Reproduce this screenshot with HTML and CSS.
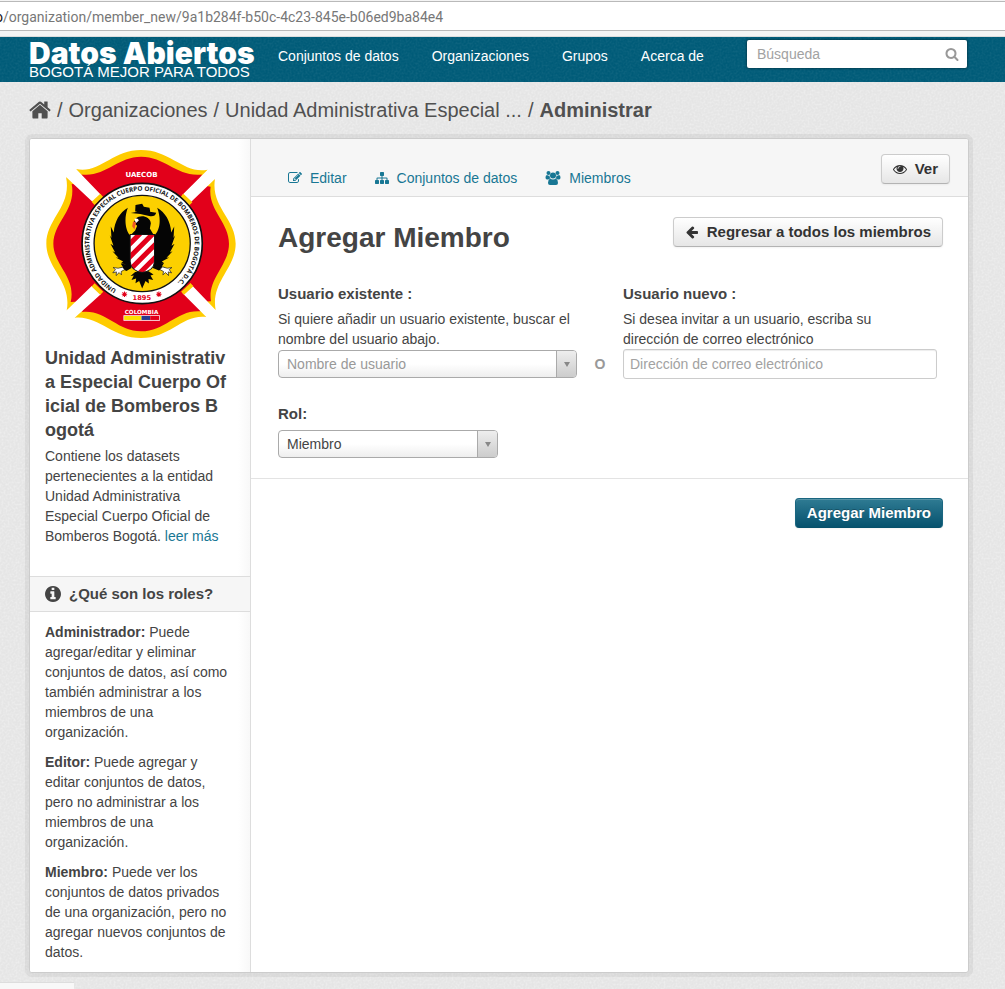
FILE: index.html
```html
<!DOCTYPE html>
<html lang="es">
<head>
<meta charset="utf-8">
<meta name="viewport" content="width=device-width, initial-scale=1">
<title>Agregar Miembro - Datos Abiertos</title>
<link rel="stylesheet" href="styles.css">
</head>
<body>
<div class="browser-bar"><div class="address"><span class="address-host">o</span>/organization/member_new/9a1b284f-b50c-4c23-845e-b06ed9ba84e4</div></div>

<header class="masthead">
  <a class="brand" href="#"><span class="brand-name">Datos Abiertos</span><span class="brand-tag">BOGOTÁ MEJOR PARA TODOS</span></a>
  <nav class="site-nav">
    <a href="#">Conjuntos de datos</a>
    <a href="#">Organizaciones</a>
    <a href="#">Grupos</a>
    <a href="#">Acerca de</a>
  </nav>
  <form class="site-search">
    <input type="text" placeholder="Búsqueda" aria-label="Búsqueda">
    <button type="button" aria-label="Buscar"><svg class="icon" viewBox="0 0 1792 1792"><path d="M1216 832q0-185-131.5-316.5t-316.5-131.5-316.5 131.5-131.5 316.5 131.5 316.5 316.5 131.5 316.5-131.5 131.5-316.5zm512 832q0 52-38 90t-90 38q-54 0-90-38l-343-342q-179 124-399 124-143 0-273.5-55.5t-225-150-150-225-55.5-273.5 55.5-273.5 150-225 225-150 273.5-55.5 273.5 55.5 225 150 150 225 55.5 273.5q0 220-124 399l343 343q37 37 37 90z"/></svg></button>
  </form>
</header>

<nav class="breadcrumb" aria-label="Ruta">
  <a class="home" href="#" aria-label="Inicio"><svg viewBox="64 250 1664 1300"><path d="M1472 992v480q0 26-19 45t-45 19h-384v-384h-256v384h-384q-26 0-45-19t-19-45v-480q0-1 .5-3t.5-3l575-474 575 474q1 2 1 6zm223-69l-62 74q-8 9-21 11h-3q-13 0-21-7l-692-577-692 577q-12 8-24 7-13-2-21-11l-62-74q-8-10-7-23.5t11-21.5l719-599q32-26 76-26t76 26l244 204v-195q0-14 9-23t23-9h192q14 0 23 9t9 23v408l219 182q10 8 11 21.5t-7 23.5z"/></svg></a>
  <span>/</span><a href="#">Organizaciones</a><span>/</span><a href="#">Unidad Administrativa Especial ...</a><span>/</span><a class="active" href="#">Administrar</a>
</nav>

<div class="wrapper">
  <aside class="sidebar">
    <section class="org">
      <svg class="emblem" viewBox="48 35 567 563" role="img" aria-label="UAECOB">
        <defs>
          <path id="ring" d="M258 453 A158 158 0 1 1 418 449"/>
        </defs>
        <path fill="#fc0" d="M137 92C205 108 245 35 332 35C420 35 460 108 531 94L505 136L553 122C540 205 615 240 615 316C615 390 540 430 555 514L510 494L527 535C455 526 420 598 332 598C245 598 205 530 133 537L155 495L109 515C125 430 48 390 48 316C48 240 125 205 107 116L157 135Z"/>
        <path fill="#e2001a" d="M153 108C225 117 260 55 332 55C405 55 440 117 515 108L494 137L540 145C530 215 595 250 595 316C595 380 530 420 541 488L500 490L510 518C440 512 405 578 332 578C260 578 225 512 155 520L165 488L121 490C138 415 69 380 69 316C69 250 138 215 124 137L165 140Z"/>
        <path fill="#fff" d="M137 92L212 170L190 194L107 116ZM531 94L455 170L478 194L553 122ZM109 515L184 442L212 466L133 537ZM555 514L484 440L456 464L527 535Z"/>
        <path stroke="#fc0" stroke-width="13" d="M188 195L214 171M454 171L481 196M188 439L214 464M456 464L484 438"/>
        <circle cx="335" cy="315" r="180" fill="#fff" stroke="#111" stroke-width="5"/>
        <circle cx="335" cy="315" r="144" fill="#fcd000" stroke="#111" stroke-width="4"/>
        <g fill="#050505">
          <path d="M292 208C268 222 252 248 250 282L241 264L243 298L238 290L249 322L240 316L254 342L246 338L264 358L256 357L278 369L271 374L300 381V292C284 275 280 240 292 208Z"/>
          <path d="M380 208C404 222 420 248 422 282L431 264L429 298L434 290L423 322L432 316L418 342L426 338L408 358L416 357L394 369L401 374L370 381V292C390 275 392 240 380 208Z"/>
          <path d="M316 240C330 228 358 233 361 254L358 270L370 290H300L314 276L320 262L309 253Z"/>
          <path d="M301 224Q337 213 377 223Q374 236 356 233Q330 225 301 224ZM314 219L315 200L335 196L340 205L357 208L360 224Z"/>
          <path d="M300 370L281 369L285 377L271 376L278 386L268 388L288 397L303 388ZM371 370L391 367L387 376L400 374L394 384L405 387L385 396L367 388Z"/>
          <path d="M314 400L300 412L310 411L303 424L317 420L315 434L326 427L335 450L345 427L355 435L354 421L368 424L360 411L369 408L354 398Z"/>
        </g>
        <path fill="#fff" d="M312 241Q323 237 325 246L316 254Z"/>
        <path fill="#f15a24" d="M308 248L317 253Q313 264 312 273L305 263Z"/>
        <clipPath id="shield"><path d="M299 288H372V369Q370 397 335 402Q301 397 299 369Z"/></clipPath>
        <g clip-path="url(#shield)"><path fill="#fff" d="M295 280H380V410H295Z"/><path stroke="#e2001a" stroke-width="15" d="M280 334L350 264M280 373L390 263M280 412L390 302M300 431L390 341"/></g>
        <path fill="none" stroke="#111" stroke-width="3" d="M299 288H372V369Q370 397 335 402Q301 397 299 369Z"/>
        <path fill="#fff" stroke="#111" stroke-width="2" d="M276 386L283 393L272 399L273 409L266 402L257 411L258 400L247 403L255 393L248 387L263 389ZM396 385L388 393L399 399L397 409L405 402L414 411L413 400L423 403L416 393L424 387L410 389Z"/>
        <text class="ring-text"><textPath href="#ring">UNIDAD ADMINISTRATIVA ESPECIAL CUERPO OFICIAL DE BOMBEROS DE BOGOTÁ D.C.</textPath></text>
        <text class="plate-text" x="333" y="116">UAECOB</text>
        <text class="year-text" x="334" y="484">1895</text>
        <text class="country-text" x="333" y="525">COLOMBIA</text>
        <path stroke="#e2001a" stroke-width="3" d="M274 467H290M282 459V475M276 461L288 473M288 461L276 473M377 467H393M385 459V475M379 461L391 473M391 461L379 473"/>
        <circle cx="282" cy="467" r="4" fill="#e2001a"/><circle cx="385" cy="467" r="4" fill="#e2001a"/>
        <path fill="#fff" d="M279 530H388V546H279Z"/><path fill="#fde000" d="M281 532H333V544H281Z"/><path fill="#253a8e" d="M333 532H359V544H333Z"/><path fill="#e2001a" d="M359 532H386V544H359Z"/>
      </svg>
      <h1 class="org-name">Unidad Administrativa Especial Cuerpo Oficial de Bomberos Bogotá</h1>
      <p class="org-about">Contiene los datasets pertenecientes a la entidad Unidad Administrativa Especial Cuerpo Oficial de Bomberos Bogotá. <a href="#">leer más</a></p>
    </section>
    <h2 class="roles-title"><svg viewBox="128 128 1536 1536"><path d="M1152 1376v-160q0-14-9-23t-23-9h-96v-512q0-14-9-23t-23-9h-320q-14 0-23 9t-9 23v160q0 14 9 23t23 9h96v320h-96q-14 0-23 9t-9 23v160q0 14 9 23t23 9h448q14 0 23-9t9-23zm-128-896v-160q0-14-9-23t-23-9h-192q-14 0-23 9t-9 23v160q0 14 9 23t23 9h192q14 0 23-9t9-23zm640 416q0 209-103 385.5t-279.5 279.5-385.5 103-385.5-103-279.5-279.5-103-385.5 103-385.5 279.5-279.5 385.5-103 385.5 103 279.5 279.5 103 385.5z"/></svg>¿Qué son los roles?</h2>
    <div class="roles">
      <p><strong>Administrador:</strong> Puede agregar/editar y eliminar conjuntos de datos, así como también administrar a los miembros de una organización.</p>
      <p><strong>Editor:</strong> Puede agregar y editar conjuntos de datos, pero no administrar a los miembros de una organización.</p>
      <p><strong>Miembro:</strong> Puede ver los conjuntos de datos privados de una organización, pero no agregar nuevos conjuntos de datos.</p>
    </div>
  </aside>

  <main class="primary">
    <div class="page-header">
      <nav class="tabs">
        <a href="#"><svg class="icon" viewBox="0 0 1792 1792"><path d="M888 1184l116-116-152-152-116 116v56h96v96h56zm440-720q-16-16-33 1l-350 350q-17 17-1 33t33-1l350-350q17-17 1-33zm80 594v190q0 119-84.5 203.5t-203.5 84.5h-832q-119 0-203.5-84.5t-84.5-203.5v-832q0-119 84.5-203.5t203.5-84.5h832q63 0 117 25 15 7 18 23 3 17-9 29l-49 49q-14 14-32 8-23-6-45-6h-832q-66 0-113 47t-47 113v832q0 66 47 113t113 47h832q66 0 113-47t47-113v-126q0-13 9-22l64-64q15-15 35-7t20 29zm-96-738l288 288-672 672h-288v-288zm444 132l-92 92-288-288 92-92q28-28 68-28t68 28l152 152q28 28 28 68t-28 68z"/></svg>Editar</a>
        <a href="#"><svg class="icon" viewBox="0 0 1792 1792"><path d="M1792 1248v320q0 40-28 68t-68 28h-320q-40 0-68-28t-28-68v-320q0-40 28-68t68-28h96v-192h-512v192h96q40 0 68 28t28 68v320q0 40-28 68t-68 28h-320q-40 0-68-28t-28-68v-320q0-40 28-68t68-28h96v-192h-512v192h96q40 0 68 28t28 68v320q0 40-28 68t-68 28h-320q-40 0-68-28t-28-68v-320q0-40 28-68t68-28h96v-192q0-52 38-90t90-38h512v-192h-96q-40 0-68-28t-28-68v-320q0-40 28-68t68-28h320q40 0 68 28t28 68v320q0 40-28 68t-68 28h-96v192h512q52 0 90 38t38 90v192h96q40 0 68 28t28 68z"/></svg>Conjuntos de datos</a>
        <a href="#"><svg class="icon icon-wide" viewBox="0 0 30 28"><circle cx="6" cy="4" r="4"/><circle cx="24" cy="4" r="4"/><circle cx="15" cy="9" r="6"/><path d="M3 8Q6 10 8 9Q8 13 10 15Q7 15 6 17H3Q0 17 0 13Q0 8 3 8ZM27 8Q24 10 22 9Q22 13 20 15Q23 15 24 17H27Q30 17 30 13Q30 8 27 8ZM9 15Q15 19 21 15Q25 17 25 24Q25 28 21 28H9Q5 28 5 24Q5 17 9 15Z"/></svg>Miembros</a>
      </nav>
      <a class="btn" href="#"><svg class="icon" viewBox="0 0 1792 1792"><path d="M1664 960q-152-236-381-353 61 104 61 225 0 185-131.5 316.5t-316.5 131.5-316.5-131.5-131.5-316.5q0-121 61-225-229 117-381 353 133 205 333.5 326.5t434.5 121.5 434.5-121.5 333.5-326.5zm-720-384q0-20-14-34t-34-14q-125 0-214.5 89.5t-89.5 214.5q0 20 14 34t34 14 34-14 14-34q0-86 61-147t147-61q20 0 34-14t14-34zm848 384q0 34-20 69-140 230-376.5 368.5t-499.5 138.5-499.5-139-376.5-368q-20-35-20-69t20-69q140-229 376.5-368t499.5-139 499.5 139 376.5 368q20 35 20 69z"/></svg>Ver</a>
    </div>
    <form class="member-form">
      <div class="form-body">
        <div class="form-head">
          <h1>Agregar Miembro</h1>
          <a class="btn" href="#"><svg class="icon" viewBox="0 0 1792 1792"><path d="M1664 896v128q0 53-32.5 90.5t-84.5 37.5h-704l293 294q38 36 38 90t-38 90l-75 76q-37 37-90 37-52 0-91-37l-651-652q-37-37-37-90 0-52 37-91l651-650q38-38 91-38 52 0 90 38l75 74q38 38 38 91t-38 91l-293 293h704q52 0 84.5 37.5t32.5 90.5z"/></svg>Regresar a todos los miembros</a>
        </div>
        <div class="user-row">
          <div class="field field-existing">
            <label for="username">Usuario existente :</label>
            <p>Si quiere añadir un usuario existente, buscar el nombre del usuario abajo.</p>
            <span class="select"><select id="username" class="is-empty"><option>Nombre de usuario</option></select></span>
          </div>
          <div class="or">O</div>
          <div class="field field-new">
            <label for="email">Usuario nuevo :</label>
            <p>Si desea invitar a un usuario, escriba su dirección de correo electrónico</p>
            <input id="email" type="email" placeholder="Dirección de correo electrónico">
          </div>
        </div>
        <div class="field field-role">
          <label for="role">Rol:</label>
          <span class="select"><select id="role"><option>Miembro</option></select></span>
        </div>
      </div>
      <div class="form-actions"><button class="btn btn-primary" type="button">Agregar Miembro</button></div>
    </form>
  </main>
</div>
<div class="status-bar"></div>
</body>
</html>
```
FILE: styles.css
```css
:root {
  --grain: url("data:image/svg+xml,%3Csvg xmlns='http://www.w3.org/2000/svg' width='200' height='200'%3E%3Cfilter id='n'%3E%3CfeTurbulence type='fractalNoise' baseFrequency='.5' numOctaves='2' stitchTiles='stitch'/%3E%3CfeColorMatrix values='0 0 0 0 1 0 0 0 0 1 0 0 0 0 1 1.2 0 0 0 -.45'/%3E%3C/filter%3E%3Crect width='200' height='200' filter='url(%23n)' opacity='.6'/%3E%3C/svg%3E");
  --grain-dark: url("data:image/svg+xml,%3Csvg xmlns='http://www.w3.org/2000/svg' width='200' height='200'%3E%3Cfilter id='n'%3E%3CfeTurbulence type='fractalNoise' baseFrequency='.5' numOctaves='2' stitchTiles='stitch'/%3E%3CfeColorMatrix values='0 0 0 0 1 0 0 0 0 1 0 0 0 0 1 1.2 0 0 0 -.45'/%3E%3C/filter%3E%3Crect width='200' height='200' filter='url(%23n)' opacity='.1'/%3E%3C/svg%3E");
}
* { box-sizing: border-box; }
body {
  margin: 0;
  background: #e5e5e5 var(--grain);
  color: #444;
  font: 14px/20px "Liberation Sans", Arial, sans-serif;
}
a { color: #187794; text-decoration: none; }
h1, h2, p { margin: 0; }
svg { display: block; fill: currentColor; flex: none; }
.icon { width: 14px; height: 14px; }
.icon-wide { width: 16px; }

.browser-bar { padding: 1px 0 5px; background: #f4f4f4; border-bottom: 1px solid #dcdcdc; overflow: hidden; }
.address {
  height: 30px;
  margin-left: -5px;
  background: #fff;
  border: solid #b9b9b9;
  border-width: 1px 0;
  color: #777;
  font: 14px/30px Roboto, "Noto Sans", sans-serif;
  white-space: nowrap;
}
.address-host { color: #111; }

.masthead { display: flex; align-items: flex-start; height: 45px; padding: 0 38px 0 29px; background: #005b78 var(--grain-dark); }
.masthead a { color: #fff; }
.brand { width: 249px; padding-top: 2px; flex: none; white-space: nowrap; }
.brand span { display: block; }
.brand-name { font: 900 30px/28px Inter, "Liberation Sans", sans-serif; }
.brand-tag { font-size: 15px; line-height: 10px; }
.site-nav { display: flex; gap: 33px; padding-top: 9px; white-space: nowrap; }
.site-search { display: flex; width: 220px; height: 28px; margin: 3px 0 0 auto; background: #fff; border-radius: 2px; box-shadow: 0 0 2px 1px rgba(0, 0, 0, .3); }
.site-search input { flex: 1; min-width: 0; padding: 0 10px; border: 0; background: none; font: inherit; }
.site-search button { padding: 0 8px; border: 0; background: none; color: #999; }
::placeholder { color: #a2a2a2; opacity: 1; }

.breadcrumb { display: flex; align-items: center; gap: 6px; height: 56px; padding: 0 29px; color: #505050; font-size: 20px; white-space: nowrap; }
.breadcrumb a { color: inherit; }
.breadcrumb .active { font-weight: bold; }
.home svg { width: 22px; height: 18px; }

.wrapper { display: flex; margin: 0 36px 16px 29px; background: #fff; border: 1px solid #ccc; border-radius: 3px; box-shadow: 0 0 0 4px rgba(0, 0, 0, .05); overflow: hidden; }
.sidebar { width: 221px; flex: none; border-right: 1px solid #ddd; background: linear-gradient(to left, #f8f8f8, #fff 12px); }
.org { padding: 11px 15px 30px; }
.emblem { width: 190px; height: 188px; margin-left: 1px; }
.org-name { padding: 8px 6px 0 0; font-size: 18px; line-height: 24px; word-break: break-all; }
.org-about { padding-top: 4px; }
.ring-text { font: bold 19px "Open Sans", sans-serif; fill: #111; }
.plate-text { font: bold 21px "DejaVu Sans", sans-serif; fill: #fff; text-anchor: middle; }
.year-text { font: bold 20px "DejaVu Sans", sans-serif; fill: #e2001a; text-anchor: middle; }
.country-text { font: bold 17px "DejaVu Sans", sans-serif; fill: #fff; text-anchor: middle; }
.roles-title { display: flex; align-items: center; gap: 8px; height: 36px; padding: 0 15px; background: #f6f6f6; border: solid #ddd; border-width: 1px 0; font-size: 15px; line-height: 20px; }
.roles-title svg { width: 16px; height: 16px; }
.roles { padding: 10px 15px; }
.roles p + p { margin-top: 10px; }

.primary { flex: 1; min-width: 0; }
.page-header { display: flex; justify-content: space-between; align-items: flex-start; padding: 15px 18px 8px 37px; background: #f6f6f6; border-bottom: 1px solid #ddd; }
.tabs { display: flex; gap: 28px; padding-top: 14px; }
.tabs a { display: flex; align-items: center; gap: 8px; }
.btn {
  display: flex; align-items: center; gap: 8px; height: 30px; padding: 0 11px;
  border: 1px solid #ccc; border-bottom-color: #b3b3b3; border-radius: 4px;
  background: linear-gradient(#fff, #e6e6e6);
  box-shadow: inset 0 1px 0 rgba(255, 255, 255, .2), 0 1px 2px rgba(0, 0, 0, .05);
  color: #333; font: bold 15px/20px "Liberation Sans", Arial, sans-serif; white-space: nowrap;
}
.btn-primary { border-color: #1a6680 #1a6680 #06506a; background: linear-gradient(#2f7b93, #06526e); color: #fff; text-shadow: 0 -1px 0 rgba(0, 0, 0, .25); }
.form-body { padding: 20px 25px 20px 27px; border-bottom: 1px solid #e3e3e3; }
.form-head { display: flex; justify-content: space-between; }
.form-head h1 { font-size: 28px; line-height: 42px; }
.user-row { display: flex; align-items: flex-end; padding: 25px 6px 0 0; }
.field label { display: block; margin-bottom: 5px; font-size: 15px; font-weight: bold; }
.field-existing { flex: 299; min-width: 0; }
.field-new { flex: 314; min-width: 0; }
.field-new p { padding-right: 20px; }
.or { width: 46px; height: 30px; color: #999; font-weight: bold; line-height: 30px; text-align: center; }
.field-role { width: 220px; padding-top: 25px; }
.field-role label { margin-bottom: 6px; }
.select { display: block; position: relative; height: 28px; }
.field-existing .select { margin: 1px 0; }
.select select {
  width: 100%; height: 28px; padding: 0 28px 0 8px; appearance: none;
  border: 1px solid #aaa; border-radius: 4px; background: linear-gradient(#fff 50%, #eee);
  color: #444; font: inherit;
}
.select .is-empty { color: #999; }
.select::before { content: ""; position: absolute; top: 1px; right: 1px; bottom: 1px; width: 19px; border-left: 1px solid #aaa; border-radius: 0 3px 3px 0; background: linear-gradient(#eee, #ccc); pointer-events: none; }
.select::after { content: ""; position: absolute; top: 12px; right: 7px; border: solid transparent; border-width: 5px 3px 0; border-top-color: #888; pointer-events: none; }
.field input { display: block; width: 100%; height: 30px; padding: 4px 6px; border: 1px solid #ccc; border-radius: 3px; background: #fff; box-shadow: inset 0 1px 1px rgba(0, 0, 0, .075); color: #555; font: inherit; }
.form-actions { display: flex; justify-content: flex-end; padding: 19px 25px; }

.status-bar { position: fixed; left: 0; bottom: 0; width: 74px; height: 7px; background: #f8f8f8; border-top: 1px solid #ddd; }
```
